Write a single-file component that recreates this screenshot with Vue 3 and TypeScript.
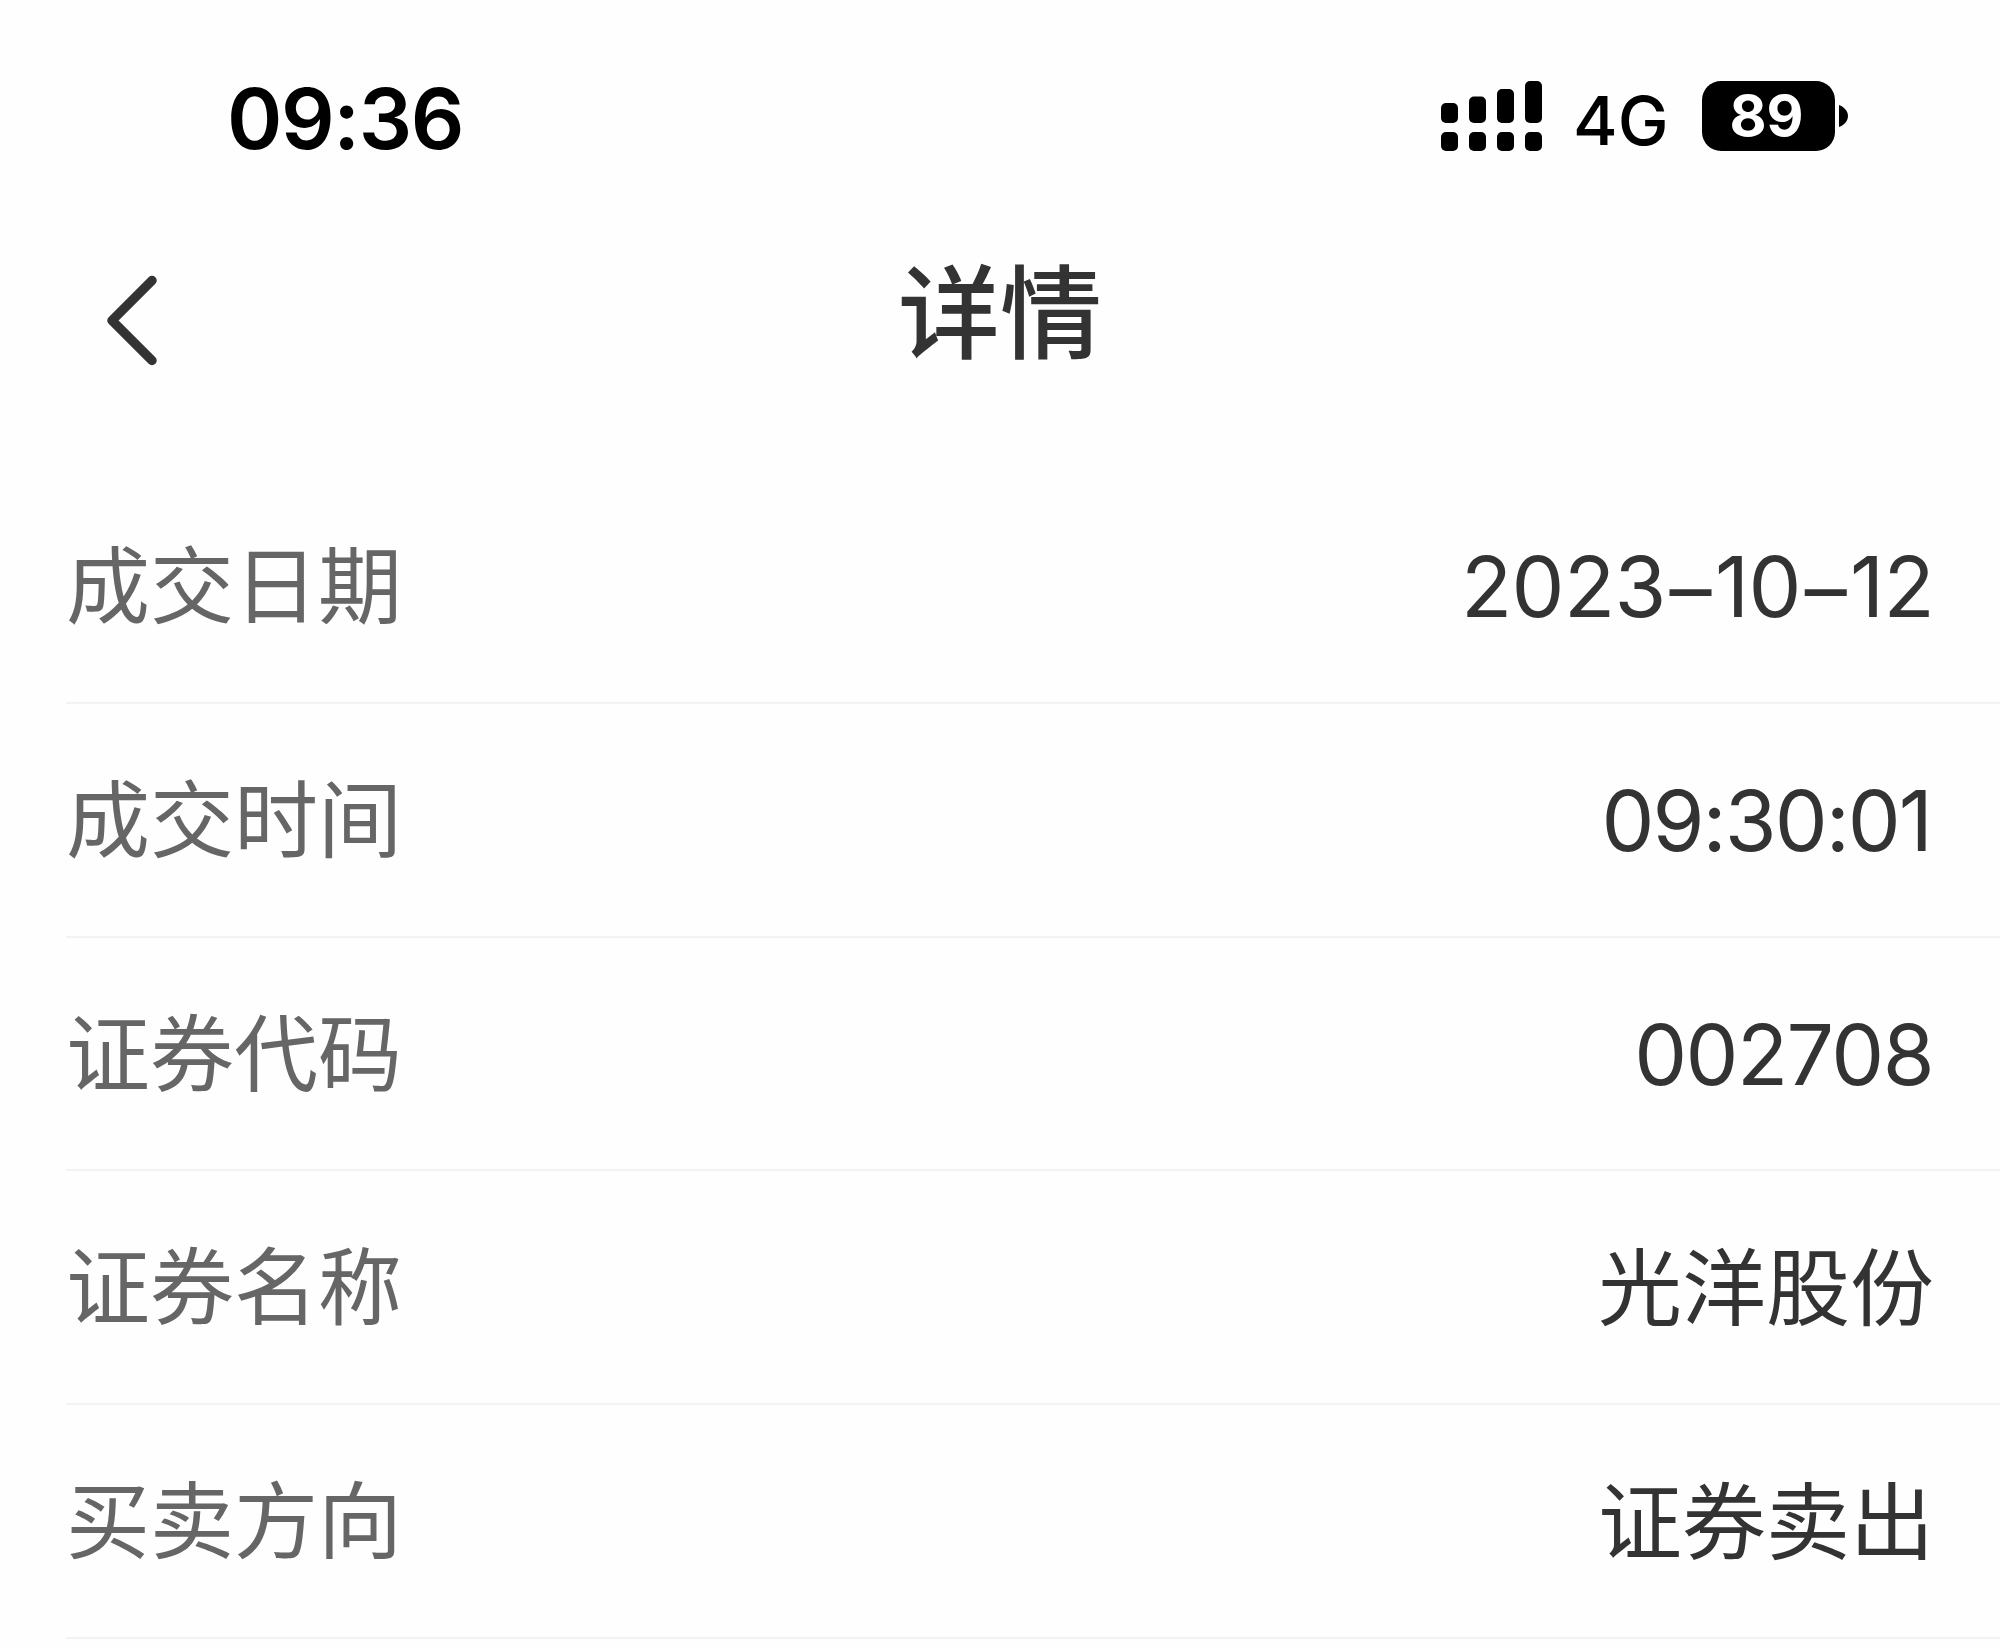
<script setup lang="ts">
import { ref } from 'vue';

interface DetailRow {
  label: string;
  value: string;
  kind: string;
}

const time = ref('09:36');
const network = ref('4G');
const battery = ref(89);

const rows = ref<DetailRow[]>([
  { label: '成交日期', value: '2023–10–12', kind: 'date' },
  { label: '成交时间', value: '09:30:01', kind: 'time' },
  { label: '证券代码', value: '002708', kind: 'code' },
  { label: '证券名称', value: '光洋股份', kind: 'text' },
  { label: '买卖方向', value: '证券卖出', kind: 'text' },
]);

// keeps the dashes as their own parts so they can be spaced separately
const splitValue = (value: string) => value.split(/(–)/);
</script>

<template>
  <div class="page">
    <div class="status-bar">
      <span class="clock">{{ time }}</span>
      <div class="status-right">
        <svg class="signal" width="102" height="70" viewBox="0 0 102 70">
          <rect x="0" y="22" width="17" height="20" rx="5" />
          <rect x="28" y="15.5" width="17" height="26.5" rx="5" />
          <rect x="56" y="8" width="17" height="34" rx="5" />
          <rect x="84" y="0" width="17" height="42" rx="5" />
          <rect x="0" y="51" width="17" height="19" rx="5" />
          <rect x="28" y="51" width="17" height="19" rx="5" />
          <rect x="56" y="51" width="17" height="19" rx="5" />
          <rect x="84" y="51" width="17" height="19" rx="5" />
        </svg>
        <span class="network">{{ network }}</span>
        <div class="battery">
          <span class="level">{{ battery }}</span>
        </div>
        <svg class="battery-tip" width="9" height="22" viewBox="0 0 9 22">
          <path d="M0 0C5 2 9 6 9 11S5 20 0 22Z" />
        </svg>
      </div>
    </div>

    <div class="nav-bar">
      <svg class="back" width="52" height="92" viewBox="0 0 52 92">
        <path d="M46 6.5L6 46.5L46 86.5" />
      </svg>
      <h1>详情</h1>
    </div>

    <div class="detail-list">
      <div v-for="row in rows" :key="row.label" class="detail-row">
        <span class="label">{{ row.label }}</span>
        <span class="value" :class="row.kind">
          <span v-for="(part, i) in splitValue(row.value)" :key="i" :class="{ dash: part === '–' }">{{ part }}</span>
        </span>
      </div>
    </div>
  </div>
</template>

<style>
body {
  margin: 0;
  background: #fefefe;
}
</style>

<style scoped>
.page {
  width: 2000px;
  height: 1648px;
  overflow: hidden;
  background: #fefefe;
  color: #333;
  font-family: Inter, "Noto Sans CJK SC", sans-serif;
}

.status-bar {
  display: flex;
  justify-content: space-between;
  box-sizing: border-box;
  height: 200px;
  padding: 81px 152px 0 227px;
  color: #000;
}

.clock {
  height: 70px;
  line-height: 75px;
  font-size: 84px;
  font-weight: 600;
  letter-spacing: -1.4px;
}

.status-right {
  display: flex;
  height: 70px;
}

.network {
  width: 95px;
  margin-left: 30px;
  line-height: 78px;
  font-size: 68px;
  font-weight: 500;
  white-space: nowrap;
}

.battery {
  box-sizing: border-box;
  width: 133px;
  height: 70px;
  margin-left: 34px;
  padding-right: 4px;
  border-radius: 19px;
  background: #000;
  text-align: center;
}

.level {
  color: #fff;
  font-size: 57px;
  font-weight: 700;
  line-height: 70px;
}

.battery-tip {
  margin: 24px 0 0 4px;
}

.nav-bar {
  display: grid;
  grid-template-columns: 200px 1fr 200px;
  height: 270px;
}

.back {
  margin: 74px 0 0 106px;
  fill: none;
  stroke: #333;
  stroke-width: 9.5;
  stroke-linecap: round;
  stroke-linejoin: round;
}

h1 {
  margin: 39px 0 0;
  font-size: 102px;
  font-weight: 500;
  line-height: 150px;
  text-align: center;
}

.detail-list {
  padding-left: 66px;
}

.detail-row {
  display: flex;
  justify-content: space-between;
  box-sizing: border-box;
  height: 233.8px;
  padding: 52px 66px 0 0;
  border-bottom: 2px solid #f3f3f3;
  font-size: 84px;
  line-height: 130px;
}

.label {
  color: #666;
}

.value {
  color: #333;
}

.text {
  padding-top: 1px;
}

.date,
.time,
.code {
  font-feature-settings: "calt" 0;
}

.date {
  letter-spacing: -0.7px;
}

.dash {
  margin: 0 4px;
  line-height: 0;
  vertical-align: -2px;
}

.time {
  margin-right: 3px;
  letter-spacing: -2px;
}

.code {
  margin-right: 1px;
  letter-spacing: -1.6px;
}
</style>
